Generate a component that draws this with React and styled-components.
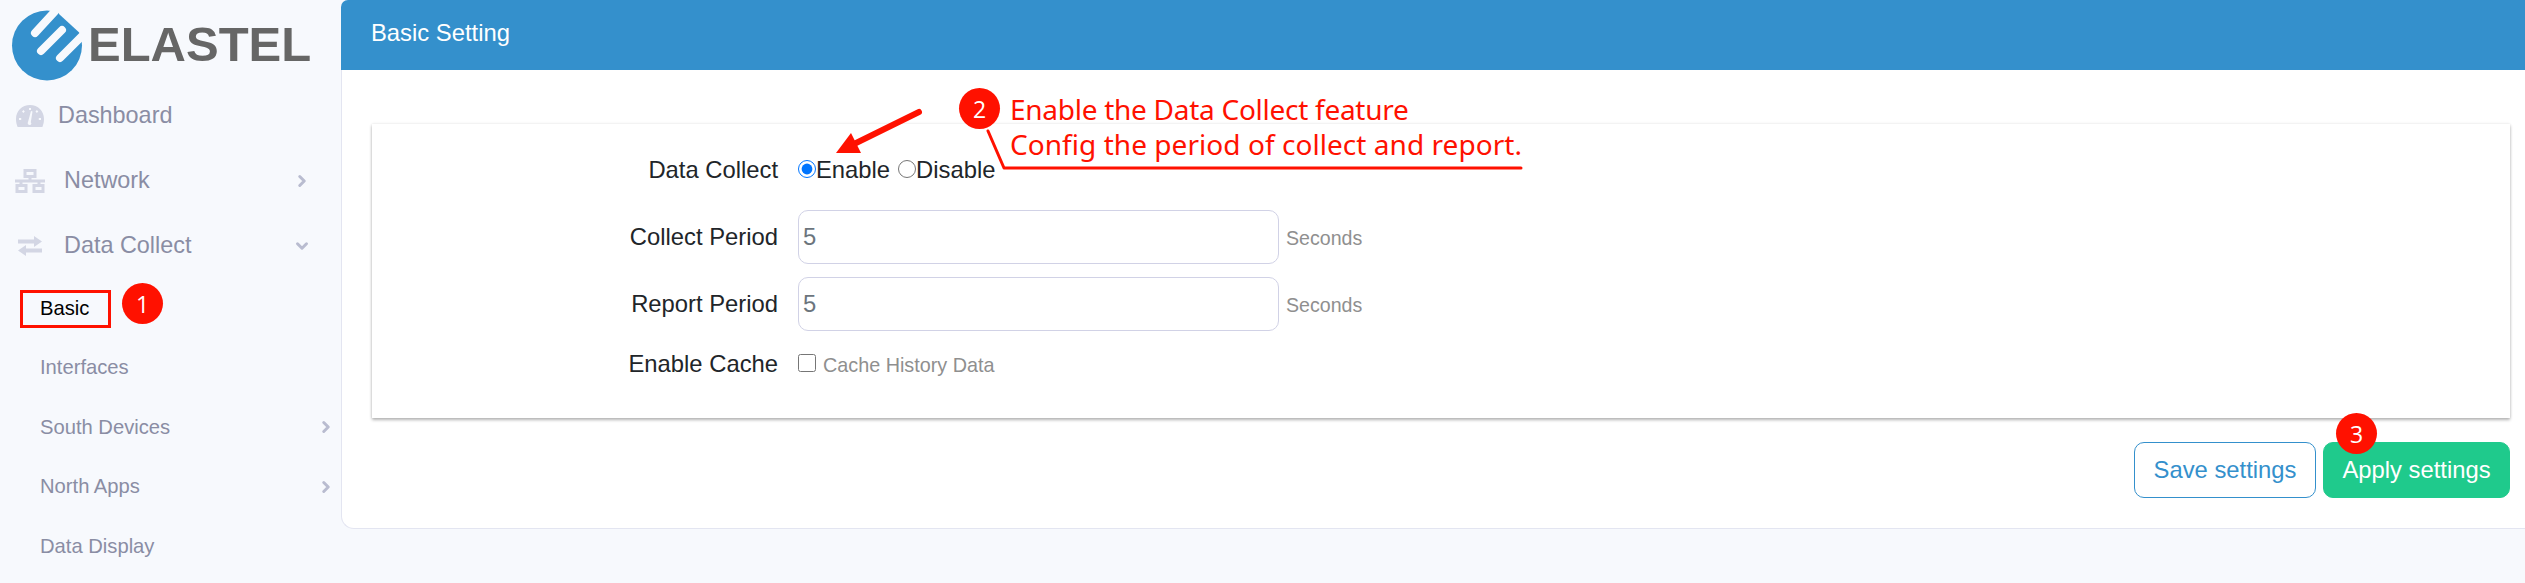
import React from 'react';
import styled, { createGlobalStyle } from 'styled-components';
import { ChevronRight, ChevronDown } from 'lucide-react';

const RED = '#ff1100';
const BLUE = '#3490cc';
const PAGE_BG = '#f7f9fd';

const GlobalStyle = createGlobalStyle`
  html, body {
    margin: 0;
    padding: 0;
    background: ${PAGE_BG};
    font-family: "Liberation Sans", Arial, sans-serif;
  }
  * { box-sizing: border-box; }
`;

// Page frame
const Page = styled.div`
  position: relative;
  display: flex;
  width: 2525px;
  height: 583px;
  overflow: hidden;
`;

const Sidebar = styled.aside`
  flex: 0 0 341px;
`;

const LogoBar = styled.div`
  display: flex;
  align-items: center;
  height: 83px;
`;

const LogoText = styled.span`
  margin: 6px 0 0 -2px;
  font-size: 49px;
  line-height: 1;
  font-weight: 700;
  color: #666;
`;

const NavItem = styled.div`
  display: flex;
  align-items: center;
  height: 65px;
  padding: 0 30px 0 14px;
  font-size: 23.4px;
  color: #8a8da4;
`;

const NavIcon = styled.span`
  display: flex;
  justify-content: center;
  flex: 0 0 32px;
  margin-right: ${(p) => p.$gap}px;
`;

const SubItem = styled.div`
  display: flex;
  align-items: center;
  height: 59.5px;
  padding: 1px 6px 0 40px;
  font-size: 20.2px;
  color: ${(p) => (p.$active ? '#000' : '#8a8da4')};
`;

const Caret = styled.span`
  display: flex;
  margin-left: auto;
  color: #b9bcd0;
`;

// Main area
const Main = styled.main`
  flex: 1;
  min-width: 0;
`;

const Header = styled.header`
  display: flex;
  align-items: center;
  height: 70px;
  padding: 0 0 4px 30px;
  background: ${BLUE};
  border-top-left-radius: 7px;
  font-size: 23.8px;
  color: #fff;
`;

const Panel = styled.section`
  height: 459px;
  padding: 54px 15px 0 30px;
  background: #fff;
  border-left: 1px solid #e3e5f1;
  border-bottom: 1px solid #e3e5f1;
  border-bottom-left-radius: 13px;
`;

const Card = styled.div`
  height: 294px;
  padding-top: 28px;
  box-shadow: 0 2px 3px rgba(0, 0, 0, 0.28), 0 0 3px rgba(0, 0, 0, 0.1);
`;

const FormRow = styled.div`
  display: grid;
  grid-template-columns: 406px 494px 1fr;
  align-items: center;
  column-gap: 7px;
  height: ${(p) => p.$height}px;
  margin-bottom: ${(p) => p.$after}px;
`;

const Label = styled.label`
  text-align: right;
  font-size: 23.8px;
  color: #212529;
`;

const Field = styled.div`
  display: flex;
  align-items: center;
  margin-left: 13px;
  font-size: 23.8px;
  color: #212529;
`;

const Radio = styled.input.attrs({ type: 'radio', readOnly: true })`
  width: 18px;
  height: 18px;
  margin: 0 0 3px ${(p) => p.$left || 0}px;
`;

const Checkbox = styled.input.attrs({ type: 'checkbox', readOnly: true })`
  width: 18px;
  height: 18px;
  margin: 0 7px 3px 0;
`;

const TextInput = styled.input.attrs({ type: 'text', readOnly: true })`
  width: 481px;
  height: 54px;
  padding: 0 4px;
  background: #fff;
  border: 1px solid #d1d2e6;
  border-radius: 10px;
  outline: none;
  font: 23.8px "Liberation Sans", Arial, sans-serif;
  color: #6c757d;
`;

const Hint = styled.span`
  padding-top: 2px;
  font-size: ${(p) => p.$size || 19.6}px;
  color: #8f8f8f;
`;

const Footer = styled.div`
  display: flex;
  justify-content: flex-end;
  gap: 7px;
  margin-top: 24px;
`;

const Button = styled.button`
  height: 56px;
  width: ${(p) => p.$width}px;
  padding: 0;
  border: 1px solid ${(p) => (p.$primary ? '#1fca8c' : BLUE)};
  border-radius: 10px;
  background: ${(p) => (p.$primary ? '#1fca8c' : '#fff')};
  color: ${(p) => (p.$primary ? '#fff' : BLUE)};
  font: 23.8px "Liberation Sans", Arial, sans-serif;
`;

// Red annotations painted over the screenshot
const Badge = styled.span`
  position: absolute;
  left: ${(p) => p.$x}px;
  top: ${(p) => p.$y}px;
  display: flex;
  align-items: center;
  justify-content: center;
  width: 41px;
  height: 41px;
  border-radius: 50%;
  background: ${RED};
  color: #fff;
  font: 23px "Open Sans", sans-serif;
`;

const ActiveBox = styled.div`
  position: absolute;
  left: 20px;
  top: 290px;
  width: 91px;
  height: 38px;
  border: 3px solid ${RED};
`;

const Note = styled.div`
  position: absolute;
  left: 1010px;
  top: 92px;
  font: 28px/35px "Noto Sans", "Open Sans", sans-serif;
  color: ${RED};
  white-space: nowrap;
`;

const NoteLine = styled.div`
  letter-spacing: ${(p) => p.$tracking}px;
`;

const Marks = styled.svg`
  position: absolute;
  left: 0;
  top: 0;
  pointer-events: none;
`;

const Logo = () => (
  <svg width="90" height="83" viewBox="0 0 90 83">
    <circle cx="47" cy="45.5" r="35" fill={BLUE} />
    <polygon points="59,14 83,36 90,0 60,0" fill={PAGE_BG} />
    <g stroke={PAGE_BG} strokeWidth="8" strokeLinecap="round">
      <line x1="35" y1="33" x2="58" y2="8" />
      <line x1="41" y1="51" x2="62" y2="30" />
      <line x1="60" y1="58" x2="88" y2="30" />
    </g>
  </svg>
);

const GaugeIcon = () => (
  <svg width="28" height="22" viewBox="0 0 28 22">
    <path
      fill="#d3d6e4"
      fillRule="evenodd"
      d="M14 0C6 0 0 6 0 14c0 3 .6 5.500 1.600 8h24.800c1-2.500 1.600-5 1.600-8C28 6 22 0 14 0zM12 17l3-11 1.500.4-1.700 10.900c1 .8.600 2.700-1 2.700-1.800 0-2.600-1.800-1.800-3zM13 3h2v2h-2zM6 6.500l1.500-1.400 1.300 1.400-1.400 1.400zM3 13h2.200v2H3zM22.800 13H25v2h-2.200zM19.500 6.500l1.400-1.400 1.400 1.400-1.400 1.400z"
    />
  </svg>
);

const NetworkIcon = () => (
  <svg width="30" height="24" viewBox="0 0 30 24" fill="none" stroke="#d3d6e4" strokeWidth="3">
    <rect x="10" y="1.500" width="10" height="6" />
    <path d="M15 7v6M0 12h30M6 12v4M24 12v4" />
    <rect x="2" y="16.500" width="9" height="6" />
    <rect x="19" y="16.500" width="9" height="6" />
  </svg>
);

const ExchangeIcon = () => (
  <svg width="24" height="20" viewBox="0 0 24 20" fill="#d3d6e4">
    <path d="M0 3.500h16V0l8 5.500-8 5.500V7.500H0zM24 16.500H8V20l-8-5.500L8 9v3.500h16z" />
  </svg>
);

const RightCaret = () => (
  <Caret><ChevronRight size={18} strokeWidth={4} /></Caret>
);

const App = () => (
  <Page>
    <GlobalStyle />
    <Sidebar>
      <LogoBar>
        <Logo />
        <LogoText>ELASTEL</LogoText>
      </LogoBar>
      <NavItem>
        <NavIcon $gap={12}><GaugeIcon /></NavIcon>
        Dashboard
      </NavItem>
      <NavItem>
        <NavIcon $gap={18}><NetworkIcon /></NavIcon>
        Network
        <RightCaret />
      </NavItem>
      <NavItem>
        <NavIcon $gap={18}><ExchangeIcon /></NavIcon>
        Data Collect
        <Caret><ChevronDown size={18} strokeWidth={4} /></Caret>
      </NavItem>
      <SubItem $active>Basic</SubItem>
      <SubItem>Interfaces</SubItem>
      <SubItem>
        South Devices
        <RightCaret />
      </SubItem>
      <SubItem>
        North Apps
        <RightCaret />
      </SubItem>
      <SubItem>Data Display</SubItem>
    </Sidebar>

    <Main>
      <Header>Basic Setting</Header>
      <Panel>
        <Card>
          <FormRow $height={36} $after={22}>
            <Label>Data Collect</Label>
            <Field>
              <Radio name="collect" defaultChecked />Enable
              <Radio name="collect" $left={8} />Disable
            </Field>
          </FormRow>
          <FormRow $height={54} $after={13}>
            <Label>Collect Period</Label>
            <Field><TextInput defaultValue="5" /></Field>
            <Hint>Seconds</Hint>
          </FormRow>
          <FormRow $height={54} $after={15}>
            <Label>Report Period</Label>
            <Field><TextInput defaultValue="5" /></Field>
            <Hint>Seconds</Hint>
          </FormRow>
          <FormRow $height={36} $after={0}>
            <Label>Enable Cache</Label>
            <Field>
              <Checkbox />
              <Hint $size={19.8}>Cache History Data</Hint>
            </Field>
          </FormRow>
        </Card>
        <Footer>
          <Button $width={182}>Save settings</Button>
          <Button $width={187} $primary>Apply settings</Button>
        </Footer>
      </Panel>
    </Main>

    <ActiveBox />
    <Badge $x={122} $y={283}>1</Badge>
    <Badge $x={959} $y={88}>2</Badge>
    <Badge $x={2336} $y={413}>3</Badge>
    <Note>
      <NoteLine $tracking={-0.27}>Enable the Data Collect feature</NoteLine>
      <NoteLine $tracking={0.05}>Config the period of collect and report.</NoteLine>
    </Note>
    <Marks width="2525" height="583" viewBox="0 0 2525 583">
      <path
        d="M988 131L1004 168H1521"
        fill="none"
        stroke={RED}
        strokeWidth="3"
        strokeLinecap="round"
        strokeLinejoin="round"
      />
      <line x1="919" y1="112" x2="852" y2="145" stroke={RED} strokeWidth="6" strokeLinecap="round" />
      <polygon points="836,153 851,133 861,153" fill={RED} />
    </Marks>
  </Page>
);

export default App;
